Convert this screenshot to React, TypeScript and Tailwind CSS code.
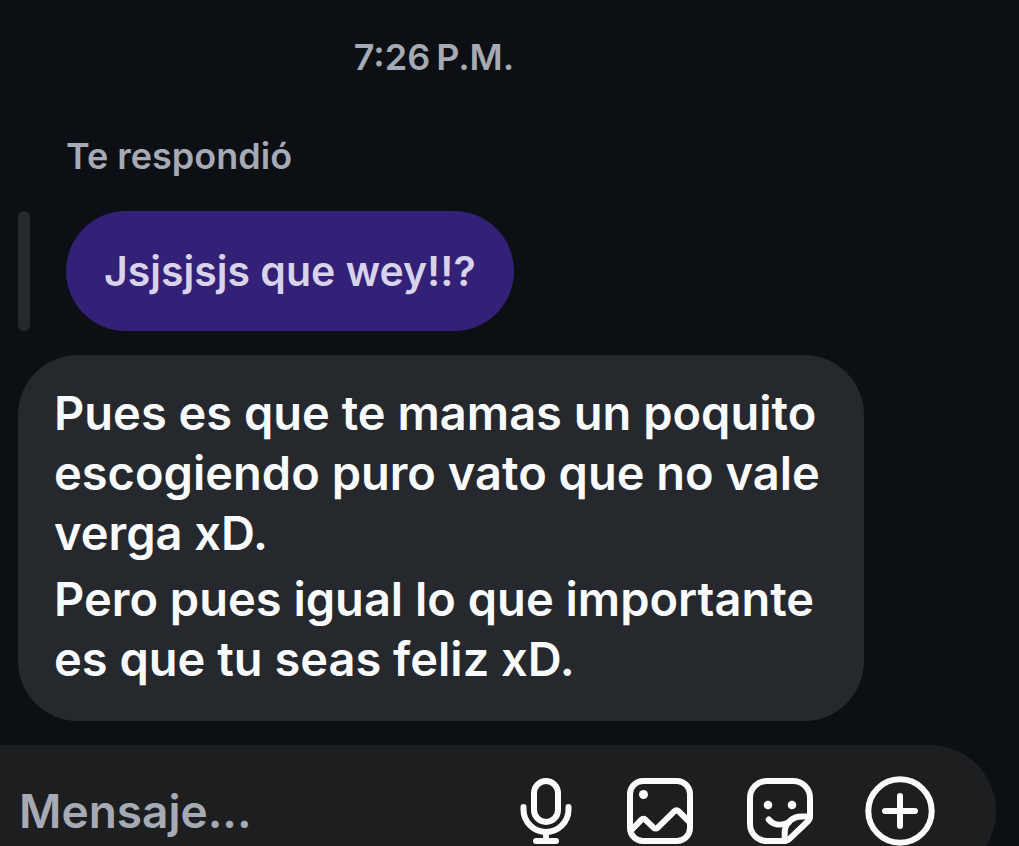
import type { ReactNode } from 'react'

interface ComposerAction {
  label: string
  icon: ReactNode
}

const message = [
  'Pues es que te mamas un poquito escogiendo puro vato que no vale verga xD.',
  'Pero pues igual lo que importante es que tu seas feliz xD.',
]

const Icon = ({ children }: { children: ReactNode }) => (
  <svg
    viewBox="0 0 72 72"
    className="block size-[72px]"
    fill="none"
    stroke="currentColor"
    strokeWidth="6"
    strokeLinecap="round"
    strokeLinejoin="round"
    aria-hidden="true"
  >
    {children}
  </svg>
)

const actions: ComposerAction[] = [
  {
    label: 'Mensaje de voz',
    icon: (
      <Icon>
        <rect x="30" y="6" width="24" height="41" rx="12" />
        <path d="M19.5 32v2.5a22.5 22.5 0 0 0 45 0V32" />
        <path d="M42 57v9M32 66h20" />
      </Icon>
    ),
  },
  {
    label: 'Galería',
    icon: (
      <Icon>
        <rect x="6" y="6" width="60" height="60" rx="13" />
        <circle cx="19.5" cy="19.5" r="4.5" fill="currentColor" stroke="none" />
        <path
          d="M7 55.5 17.5 44.6a2.6 2.6 0 0 1 3.8 0l8.5 8.2a2.6 2.6 0 0 0 3.7 0l17-16.6a2.8 2.8 0 0 1 4 0L66 47.5"
          strokeLinecap="butt"
        />
      </Icon>
    ),
  },
  {
    label: 'Stickers',
    icon: (
      <Icon>
        <path d="M66 42V23A17 17 0 0 0 49 6H23A17 17 0 0 0 6 23v26a17 17 0 0 0 17 17h18c1.6 0 3-.6 4.2-1.8L64.2 46c1.2-1.1 1.8-2.5 1.8-4Z" />
        <path d="M66 41.5h-8c-10 0-17.3 7-17.3 16V66" />
        <path d="M24.7 44.5c4.6 5.6 12.3 6.6 20 3" />
        <circle cx="24" cy="30" r="4.3" fill="currentColor" stroke="none" />
        <circle cx="48" cy="30" r="4.3" fill="currentColor" stroke="none" />
      </Icon>
    ),
  },
  {
    label: 'Más opciones',
    icon: (
      <Icon>
        <circle cx="36" cy="36" r="31.7" />
        <path d="M36 21v30M21 36h30" />
      </Icon>
    ),
  },
]

const Composer = () => (
  <form
    className="mr-[23px] flex h-[132px] shrink-0 items-center gap-12 rounded-r-full bg-[#1d1e20] pl-[19px] pr-[60px]"
    onSubmit={(e) => e.preventDefault()}
  >
    <input
      type="text"
      aria-label="Mensaje"
      placeholder="Mensaje..."
      className="min-w-0 flex-1 bg-transparent text-[46px] leading-[60px] text-[#f9fafb] outline-none placeholder:text-[#a5aab5]"
    />
    {actions.map((action) => (
      <button key={action.label} type="button" aria-label={action.label} className="shrink-0 text-[#f9fafb]">
        {action.icon}
      </button>
    ))}
  </form>
)

export default function App() {
  return (
    <div className="flex h-screen flex-col overflow-hidden bg-[#0c0f14] font-['Inter',sans-serif] font-semibold">
      <main className="flex shrink-0 flex-col items-start pb-6 pl-[18px] pr-[155px] pt-8">
        <time className="w-full pr-3.5 text-center text-[36px] leading-[50px] text-[#a5aab5]">7:26&#8239;P.M.</time>

        {/* Quoted message */}
        <p className="ml-12 mt-[49px] text-[36px] leading-[50px] text-[#a5aab5]">Te respondió</p>
        <div className="mt-[30px] flex gap-9">
          <div className="w-3 rounded-full bg-[#25282d]" />
          <p className="rounded-full bg-[#322177] px-[38px] py-[30px] text-[41px] leading-[60px] text-[#d8d2ea]">
            Jsjsjsjs que wey!!?
          </p>
        </div>

        {/* Reply */}
        <div className="mt-6 flex w-full max-w-[846px] flex-col gap-1.5 rounded-[60px] bg-[#25282d] pb-8 pl-9 pr-7 pt-7 text-[47px] leading-[60px] text-[#f9fafb]">
          {message.map((paragraph) => (
            <p key={paragraph}>{paragraph}</p>
          ))}
        </div>
      </main>

      <Composer />
    </div>
  )
}
